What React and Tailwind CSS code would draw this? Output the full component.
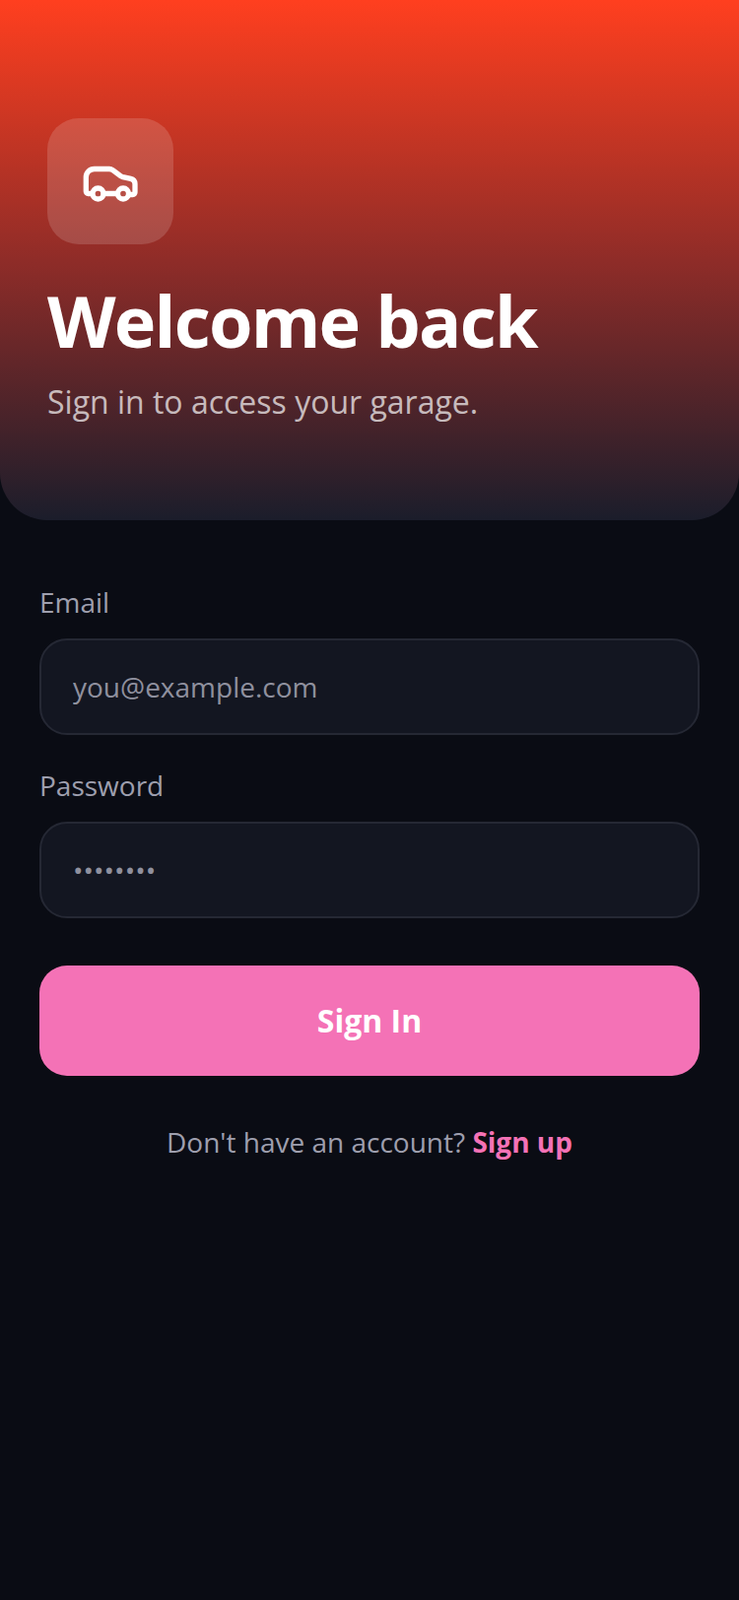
function CarIcon() {
  return (
    <svg width="76" height="56" viewBox="-2 0 76 56" fill="none" stroke="#ffffff" strokeWidth="5.300" strokeLinecap="round" strokeLinejoin="round">
      <path d="M17 40.500h-3.500c-1.200 0-2.200-1-2.200-2.200V24c0-4.800 3.700-8.500 8.500-8.500H35c1.300 0 2.400.4 3.400 1.100l8 6c.7.5 1.400.8 2.200 1l8 1.700c2.600.6 4.400 2.800 4.400 5.400v8.600c0 1.200-1 2.200-2.200 2.200H55" />
      <circle cx="23.500" cy="40.500" r="5.500" />
      <path d="M29 40.500h14" />
      <circle cx="49" cy="40.500" r="5.500" />
    </svg>
  );
}

export default function App() {
  return (
    <div className="min-h-[1624px] bg-[#0a0c14] font-['Open_Sans',sans-serif]">
      {/* Header */}
      <div className="h-[528px] rounded-b-[48px] bg-linear-to-b/srgb from-[#ff3f1f] via-[#8f2c28] to-[#1b1d2b] px-[48px] pt-[120px]">
        <div className="flex h-[128px] w-[128px] items-center justify-center rounded-[32px] bg-white/15">
          <CarIcon />
        </div>
        <h1 className="mt-[32px] text-[72px] leading-[90px] font-bold tracking-[-1.8px] text-white">Welcome back</h1>
        <p className="mt-[16px] text-[32px] leading-[44px] text-white/70">Sign in to access your garage.</p>
      </div>

      {/* Form */}
      <div className="px-[40px] pt-[64px]">
        <label className="block text-[28px] leading-[38px] text-[#9e9fae]">Email</label>
        <input
          type="email"
          placeholder="you@example.com"
          className="mt-[18px] h-[98px] w-full rounded-[28px] border-2 border-[#252834] bg-[#131621] px-[32px] text-[28px] text-white outline-none placeholder:text-[#8f909e]"
        />
        <label className="mt-[32px] block text-[28px] leading-[38px] text-[#9e9fae]">Password</label>
        <input
          type="password"
          defaultValue="password"
          className="mt-[18px] h-[98px] w-full rounded-[28px] border-2 border-[#252834] bg-[#131621] px-[32px] text-[28px] text-[#8f909e] outline-none"
        />
        <button className="mt-[48px] h-[112px] w-full rounded-[28px] bg-[#f472b6] text-[32px] font-bold text-white">Sign In</button>
        <p className="mt-[48px] text-center text-[28px] leading-[38px] text-[#9e9fae]">
          Don't have an account? <span className="font-bold text-[#f472b6]">Sign up</span>
        </p>
      </div>
    </div>
  );
}
